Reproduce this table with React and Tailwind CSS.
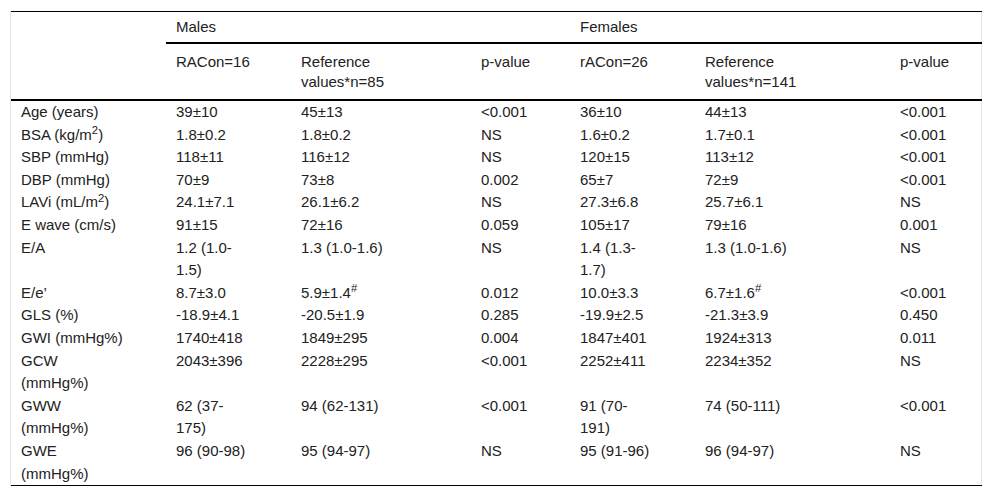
import React from "react";

const pad = [
  "pl-[10px] pr-[41px]",
  "pl-[10px] pr-[40px]",
  "pl-[10px] pr-[50px]",
  "pl-[10px] pr-[10px]",
  "pl-[10px] pr-[40px]",
  "pl-[10px] pr-[65px]",
  "pl-[10px] pr-[10px]",
];

const rows = [
  [<>Age (years)</>, "39±10", "45±13", "<0.001", "36±10", "44±13", "<0.001"],
  [<>BSA (kg/m<sup>2</sup>)</>, "1.8±0.2", "1.8±0.2", "NS", "1.6±0.2", "1.7±0.1", "<0.001"],
  [<>SBP (mmHg)</>, "118±11", "116±12", "NS", "120±15", "113±12", "<0.001"],
  [<>DBP (mmHg)</>, "70±9", "73±8", "0.002", "65±7", "72±9", "<0.001"],
  [<>LAVi (mL/m<sup>2</sup>)</>, "24.1±7.1", "26.1±6.2", "NS", "27.3±6.8", "25.7±6.1", "NS"],
  [<>E wave (cm/s)</>, "91±15", "72±16", "0.059", "105±17", "79±16", "0.001"],
  [<>E/A</>, "1.2 (1.0-1.5)", "1.3 (1.0-1.6)", "NS", "1.4 (1.3-1.7)", "1.3 (1.0-1.6)", "NS"],
  [<>E/e’</>, "8.7±3.0", <>5.9±1.4<sup>#</sup></>, "0.012", "10.0±3.3", <>6.7±1.6<sup>#</sup></>, "<0.001"],
  [<>GLS (%)</>, "-18.9±4.1", "-20.5±1.9", "0.285", "-19.9±2.5", "-21.3±3.9", "0.450"],
  [<>GWI (mmHg%)</>, "1740±418", "1849±295", "0.004", "1847±401", "1924±313", "0.011"],
  [<>GCW (mmHg%)</>, "2043±396", "2228±295", "<0.001", "2252±411", "2234±352", "NS"],
  [<>GWW (mmHg%)</>, "62 (37-175)", "94 (62-131)", "<0.001", "91 (70-191)", "74 (50-111)", "<0.001"],
  [<>GWE (mmHg%)</>, "96 (90-98)", "95 (94-97)", "NS", "95 (91-96)", "96 (94-97)", "NS"],
];

const head = ["RACon=16", "Reference values*n=85", "p-value", "rACon=26", "Reference values*n=141", "p-value"];

export default function App() {
  return (
    <div className="min-h-screen bg-white pt-[11px] pl-[10px] font-['Liberation_Sans',Arial,sans-serif] text-[15px] text-[#222]">
      <div className="w-[972px] border-x border-[#e4e4e4]">
        <table className="w-[971px] table-fixed border-collapse border-t border-b border-black">
          <colgroup>
            <col className="w-[155px]" />
            <col className="w-[125px]" />
            <col className="w-[180px]" />
            <col className="w-[99px]" />
            <col className="w-[125px]" />
            <col className="w-[195px]" />
            <col className="w-[92px]" />
          </colgroup>
          <thead>
            <tr>
              <th rowSpan={2} className="border-b-2 border-black"></th>
              <th colSpan={3} className="border-b-2 border-black pl-[10px] py-[5px] text-left font-normal leading-[20px] align-top">
                Males
              </th>
              <th colSpan={3} className="border-b-2 border-black pl-[10px] py-[5px] text-left font-normal leading-[20px] align-top">
                Females
              </th>
            </tr>
            <tr>
              {head.map((h, j) => (
                <th key={j} className={pad[j + 1] + " border-b-2 border-black pt-[8px] pb-[7px] text-left font-normal leading-[20px] align-top"}>
                  {h}
                </th>
              ))}
            </tr>
          </thead>
          <tbody>
            {rows.map((r, i) => (
              <tr key={i}>
                {r.map((c, j) => (
                  <td key={j} className={pad[j] + " py-0 align-top leading-[22.6px]"}>
                    {c}
                  </td>
                ))}
              </tr>
            ))}
          </tbody>
        </table>
      </div>
    </div>
  );
}
